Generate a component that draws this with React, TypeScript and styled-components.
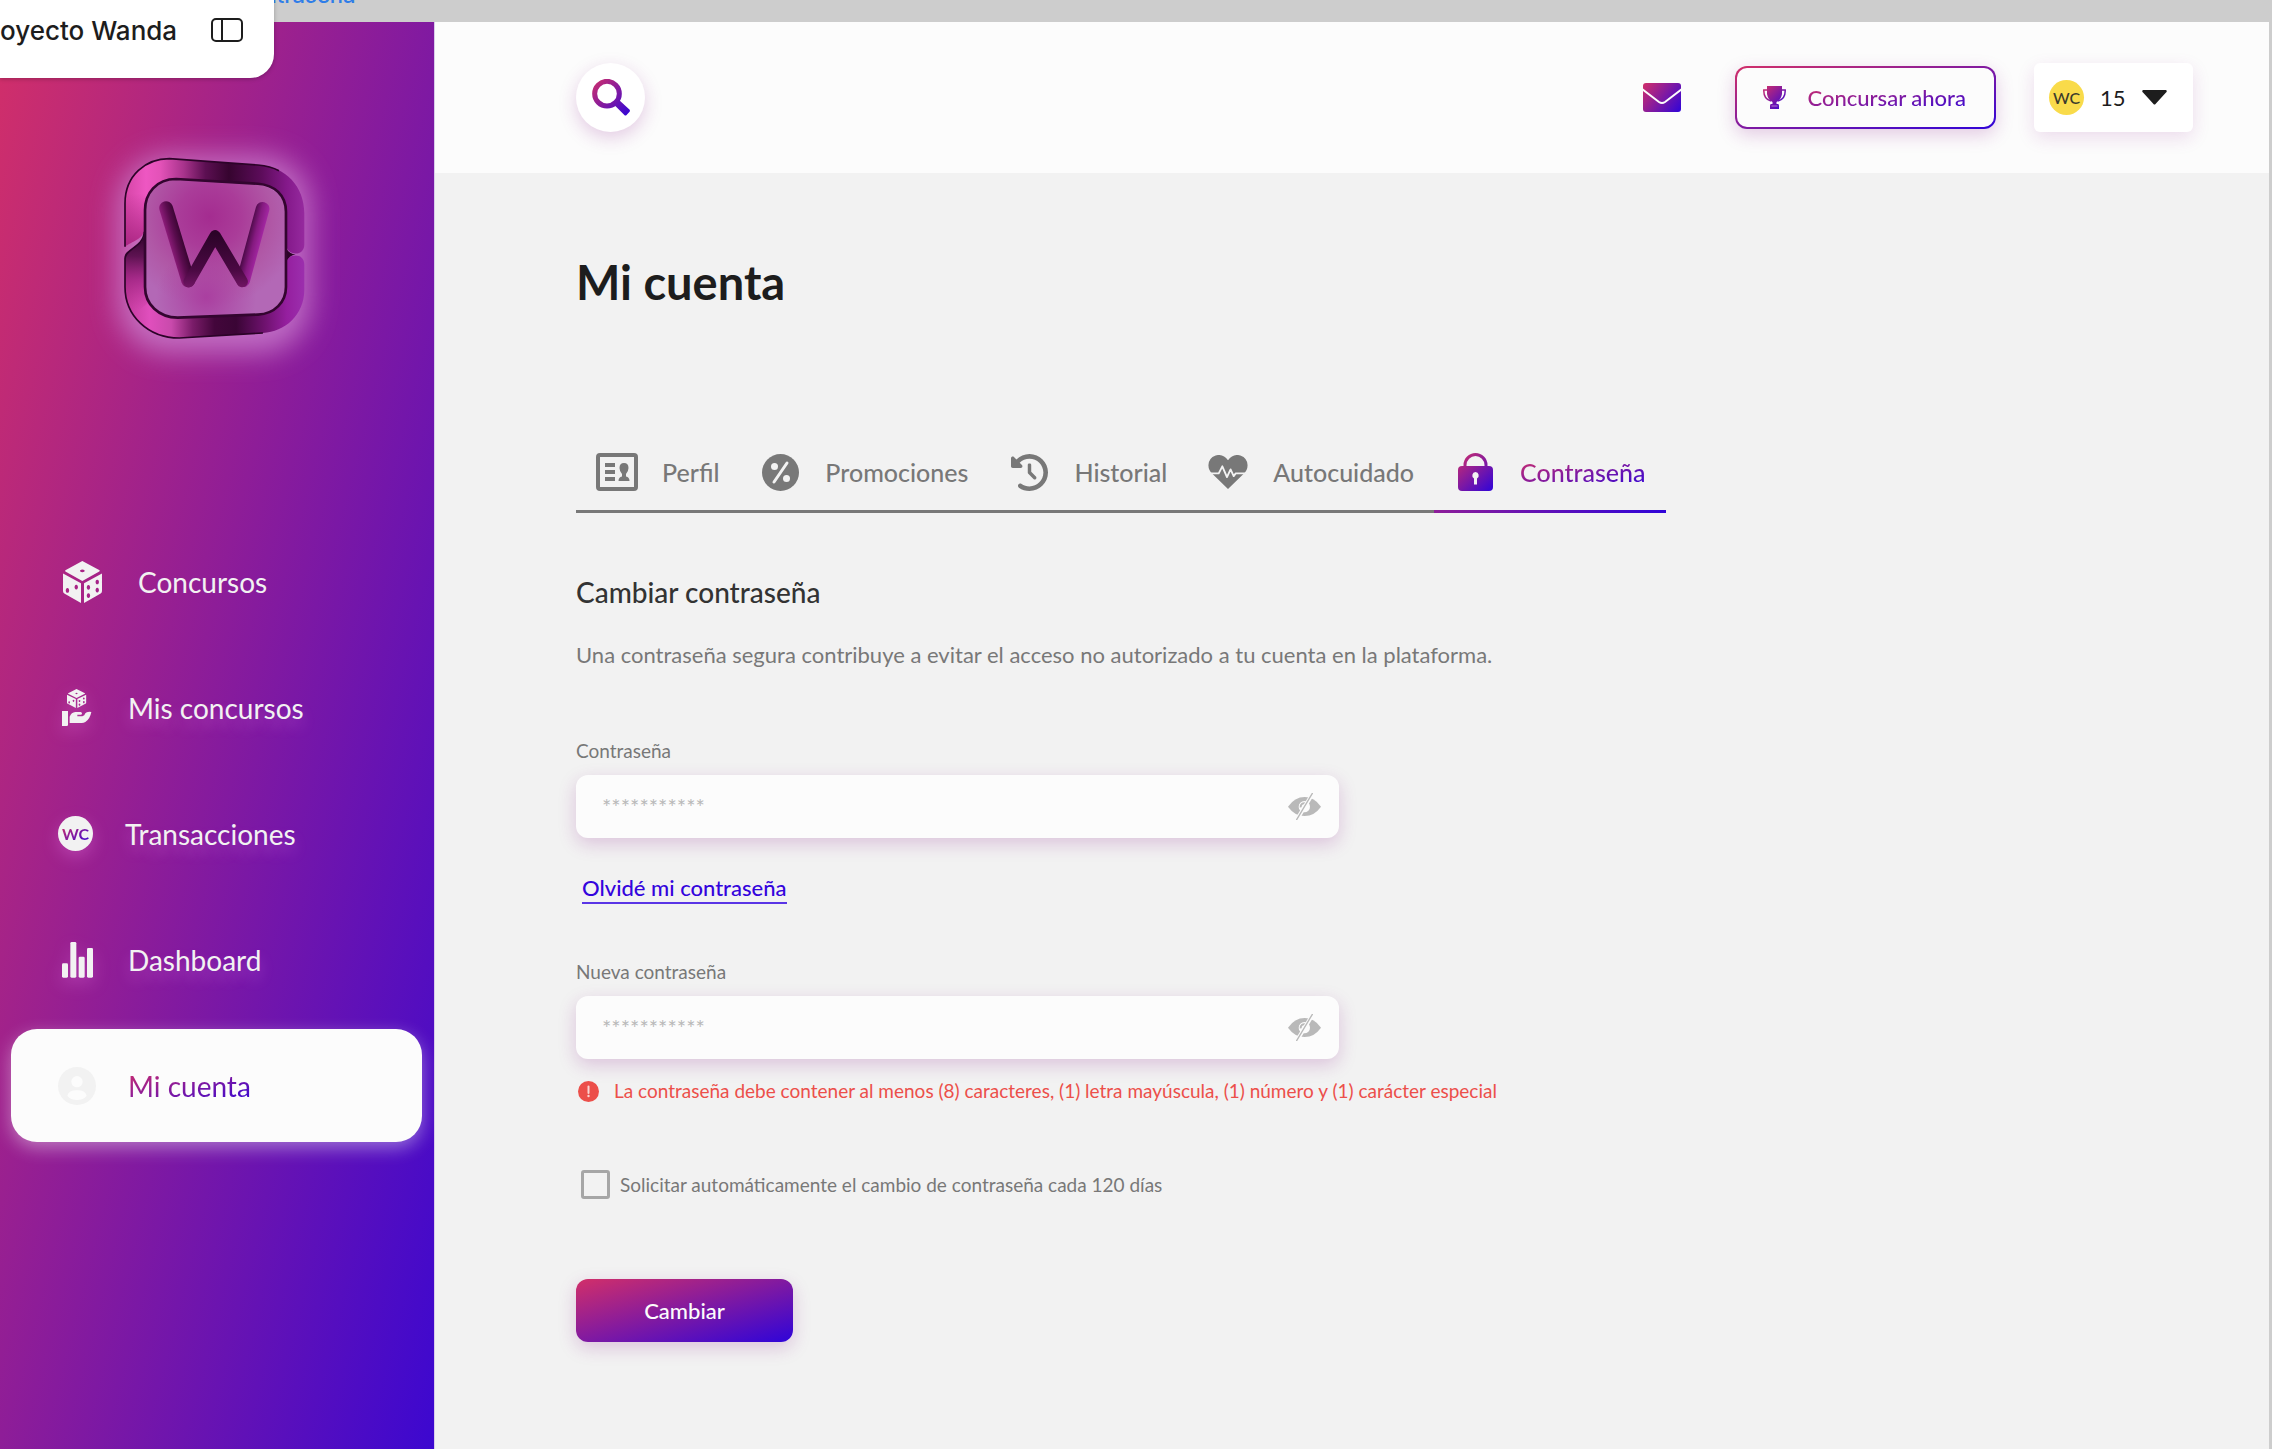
import React from "react";
import styled, { createGlobalStyle, css } from "styled-components";
import { FaClockRotateLeft } from "react-icons/fa6";

const pink = "#d22f69";
const blue = "#2f04d9";
const brandGradient = `linear-gradient(to bottom right, ${pink}, ${blue})`;
const softShadow = "0 6px 18px rgba(140, 30, 140, 0.22)";

const GlobalStyle = createGlobalStyle`
  *, *::before, *::after { box-sizing: border-box; }
  body {
    margin: 0;
    background: #f2f2f2;
    color: #1d1d1d;
    font-family: Lato, "Open Sans", sans-serif;
  }
  h1, h2, p { margin: 0; }
  button, input, select { font-family: inherit; }
  button { cursor: pointer; border: 0; background: none; padding: 0; }
  svg { display: block; flex: none; }
`;

const gradientText = css`
  background: ${brandGradient};
  background-clip: text;
  -webkit-background-clip: text;
  color: transparent;
`;

/* ---------- canvas chrome ---------- */

const CanvasStrip = styled.div`
  position: relative;
  height: 22px;
  background: #cdcdcd;
  overflow: hidden;
`;

const FrameName = styled.span`
  position: absolute;
  left: 234px;
  bottom: 13px;
  font: 500 22px/28px Inter, sans-serif;
  color: #2f7de8;
`;

const FileTab = styled.div`
  position: absolute;
  top: 0;
  left: 0;
  z-index: 2;
  display: flex;
  justify-content: space-between;
  width: 274px;
  height: 78px;
  padding: 15px 31px 0 0;
  background: #fff;
  border-radius: 0 0 24px 0;
  box-shadow: 0 1px 4px rgba(0, 0, 0, 0.25);
  font: 500 26px/32px Inter, sans-serif;
  white-space: nowrap;
`;

const PanelToggle = styled.button`
  height: 30px;
  display: flex;
  align-items: center;
  color: #1d1d1d;
`;

const Frame = styled.div`
  display: flex;
  min-height: calc(100vh - 22px);
  border-right: 3px solid #cdcdcd;
`;

/* ---------- sidebar ---------- */

const Sidebar = styled.aside`
  flex: none;
  width: 435px;
  border-right: 1px solid #d9cdea;
  padding: 136px 12px 0 11px;
  background: ${brandGradient} top left / 100% 1700px no-repeat ${blue};
`;

const Brand = styled.a`
  display: block;
  width: 181px;
  margin: 0 0 186px 113px;
`;

const Nav = styled.nav`
  display: flex;
  flex-direction: column;
  gap: 13px;
`;

const NavItem = styled.a<{ $active?: boolean; $glow?: boolean }>`
  display: flex;
  align-items: center;
  gap: 32px;
  height: 113px;
  padding: 0 47px;
  border-radius: 26px;
  font-size: 28px;
  line-height: 36px;
  color: #f2f2f2;
  text-decoration: none;
  ${(p) =>
    p.$glow &&
    css`
      text-shadow: 0 8px 14px rgba(255, 150, 255, 0.3);
      svg, i { filter: drop-shadow(0 6px 8px rgba(255, 150, 255, 0.25)); }
    `}
  ${(p) =>
    p.$active &&
    css`
      background: #fcfcfc;
      box-shadow: 0 6px 18px rgba(255, 255, 255, 0.4);
    `}
`;

const IconSlot = styled.span<{ $width?: number }>`
  display: flex;
  justify-content: center;
  width: ${(p) => p.$width ?? 38}px;
`;

const GradientLabel = styled.span`
  ${gradientText}
`;

const Coin = styled.i<{ $gold?: boolean }>`
  display: flex;
  align-items: center;
  justify-content: center;
  flex: none;
  width: 35px;
  height: 35px;
  border-radius: 50%;
  background: ${(p) => (p.$gold ? "#f9db4a" : "#f2f2f2")};
  color: #3a3a2c;
  font: ${(p) => (p.$gold ? 500 : 700)} 16px/20px Lato, sans-serif;
  text-shadow: none;
`;

/* ---------- header ---------- */

const Main = styled.main`
  flex: 1;
  min-width: 0;
`;

const Header = styled.header`
  display: flex;
  align-items: center;
  height: 151px;
  padding: 0 76px 0 141px;
  background: #fcfcfc;
`;

const SearchButton = styled.button`
  display: grid;
  place-items: center;
  width: 69px;
  height: 69px;
  margin-right: auto;
  border-radius: 50%;
  background: #fff;
  box-shadow: ${softShadow};
`;

const OutlineButton = styled.button`
  display: flex;
  align-items: center;
  gap: 22px;
  height: 63px;
  margin: 0 38px 0 54px;
  padding: 0 28px 0 26px;
  border: 2px solid transparent;
  border-radius: 12px;
  background: linear-gradient(#fcfcfc, #fcfcfc) padding-box, ${brandGradient} border-box;
  box-shadow: ${softShadow};
  font-size: 22px;
  font-weight: 500;
  line-height: 28px;
`;

const Wallet = styled.label`
  display: flex;
  align-items: center;
  height: 69px;
  width: 159px;
  padding: 0 26px 0 15px;
  border-radius: 6px;
  background: #fff;
  box-shadow: 0 6px 18px rgba(140, 30, 140, 0.14);
`;

const WalletSelect = styled.select`
  appearance: none;
  flex: 1;
  min-width: 0;
  margin-left: 16px;
  padding: 0;
  border: 0;
  background: none;
  color: #1d1d1d;
  font-size: 22px;
  line-height: 28px;
`;

/* ---------- content ---------- */

const Content = styled.div`
  padding: 81px 141px 107px;
`;

const Title = styled.h1`
  font-size: 47px;
  font-weight: 700;
  line-height: 56px;
`;

const Tabs = styled.div`
  display: flex;
  width: max-content;
  margin-top: 124px;
`;

const Tab = styled.button<{ $active?: boolean }>`
  display: flex;
  align-items: center;
  gap: 24px;
  height: 79px;
  padding: 0 20px;
  border-bottom: 3px solid #787878;
  color: #787878;
  font-size: 25px;
  font-weight: 500;
  line-height: 32px;
  ${(p) => p.$active && css`border-image: linear-gradient(90deg, #8e1e99, ${blue}) 1;`}
`;

const TabIcon = styled.span`
  display: flex;
  justify-content: center;
  width: 42px;
`;

const Form = styled.form`
  display: flex;
  flex-direction: column;
  align-items: flex-start;
  margin-top: 61px;
`;

const SectionTitle = styled.h2`
  color: #333;
  font-size: 28px;
  font-weight: 500;
  line-height: 36px;
`;

const Intro = styled.p`
  margin: 31px 0 70px;
  color: #787878;
  font-size: 22px;
  line-height: 28px;
`;

const FieldLabel = styled.label`
  color: #787878;
  font-size: 19px;
  line-height: 24px;
`;

const FieldBox = styled.div`
  display: flex;
  align-items: center;
  width: 763px;
  max-width: 100%;
  height: 63px;
  margin-top: 12px;
  padding: 0 18px 0 26px;
  border-radius: 12px;
  background: #fcfcfc;
  box-shadow: ${softShadow};
`;

const PasswordInput = styled.input`
  flex: 1;
  min-width: 0;
  padding: 0;
  border: 0;
  outline: 0;
  background: none;
  font-size: 22px;
  line-height: 28px;
  &::placeholder { color: #b9b9b9; opacity: 1; }
`;

const ForgotLink = styled.a`
  margin: 36px 0 56px 6px;
  border-bottom: 2px solid #5a35e6;
  color: #3404dd;
  font-size: 22px;
  font-weight: 500;
  line-height: 28px;
  text-decoration: none;
`;

const ErrorText = styled.p`
  display: flex;
  align-items: center;
  gap: 15px;
  margin: 20px 0 67px 2px;
  color: #ec4f4a;
  font-size: 19px;
  line-height: 24px;
`;

const CheckRow = styled.label`
  display: flex;
  align-items: center;
  gap: 10px;
  margin-left: 5px;
  color: #787878;
  font-size: 19px;
  line-height: 24px;
`;

const Checkbox = styled.input`
  appearance: none;
  width: 29px;
  height: 29px;
  margin: 0;
  border: 3px solid #a6a6a6;
  border-radius: 3px;
  &:checked { background: #a6a6a6; }
`;

const PrimaryButton = styled.button`
  width: 217px;
  height: 63px;
  margin-top: 80px;
  border-radius: 12px;
  background: ${brandGradient};
  box-shadow: ${softShadow};
  color: #fcfcfc;
  font-size: 22px;
  font-weight: 500;
  line-height: 28px;
`;

/* ---------- drawings ---------- */

const Paint = ({ id, w, h }: { id: string; w: number; h: number }) => (
  <defs>
    <linearGradient id={id} gradientUnits="userSpaceOnUse" x1="0" y1="0" x2={w} y2={h}>
      <stop stopColor={pink} />
      <stop offset="1" stopColor={blue} />
    </linearGradient>
  </defs>
);

const WandaMark = () => (
  <svg width="181" height="181" viewBox="374 474 542 542" overflow="visible" role="img" aria-label="Wanda">
    <defs>
      <linearGradient id="ringTop" gradientUnits="userSpaceOnUse" x1="375" y1="590" x2="915" y2="590">
        <stop stopColor="#d545a6" />
        <stop offset="0.12" stopColor="#ee57c2" />
        <stop offset="0.2" stopColor="#e352b8" />
        <stop offset="0.33" stopColor="#a8338c" />
        <stop offset="0.45" stopColor="#5c0f52" />
        <stop offset="0.58" stopColor="#36042f" />
        <stop offset="0.76" stopColor="#5c0c5a" />
        <stop offset="0.9" stopColor="#84198a" />
        <stop offset="1" stopColor="#962a9f" />
      </linearGradient>
      <linearGradient id="ringBottom" gradientUnits="userSpaceOnUse" x1="375" y1="900" x2="915" y2="900">
        <stop stopColor="#c23a9c" />
        <stop offset="0.14" stopColor="#e04fbd" />
        <stop offset="0.26" stopColor="#c94aac" />
        <stop offset="0.38" stopColor="#7a1c69" />
        <stop offset="0.5" stopColor="#43063b" />
        <stop offset="0.62" stopColor="#3a0535" />
        <stop offset="0.78" stopColor="#6f126f" />
        <stop offset="0.9" stopColor="#951f9f" />
        <stop offset="1" stopColor="#9c2fae" />
      </linearGradient>
      <linearGradient id="sideShade" gradientUnits="userSpaceOnUse" x1="400" y1="580" x2="400" y2="740">
        <stop stopColor="#a3207c" stopOpacity="0" />
        <stop offset="1" stopColor="#a3207c" stopOpacity="0.85" />
      </linearGradient>
      <linearGradient id="fold" gradientUnits="userSpaceOnUse" x1="420" y1="700" x2="400" y2="930">
        <stop stopColor="#2c0328" />
        <stop offset="0.3" stopColor="#4a0a42" stopOpacity="0.85" />
        <stop offset="0.6" stopColor="#8e1a75" stopOpacity="0.6" />
        <stop offset="1" stopColor="#a8247f" stopOpacity="0" />
      </linearGradient>
      <radialGradient id="panel" gradientUnits="userSpaceOnUse" cx="630" cy="650" r="270">
        <stop stopColor="#a42c90" />
        <stop offset="0.35" stopColor="#aa3c99" />
        <stop offset="0.7" stopColor="#b058a6" />
        <stop offset="1" stopColor="#b368b6" />
      </radialGradient>
      <radialGradient id="panelLow" gradientUnits="userSpaceOnUse" cx="620" cy="890" r="150">
        <stop stopColor="#aa3fa0" />
        <stop offset="1" stopColor="#aa3fa0" stopOpacity="0" />
      </radialGradient>
      <linearGradient id="armLeft" gradientUnits="userSpaceOnUse" x1="512" y1="735" x2="554" y2="723">
        <stop stopColor="#8a1b77" />
        <stop offset="0.5" stopColor="#5a0c4e" />
        <stop offset="1" stopColor="#36042f" />
      </linearGradient>
      <linearGradient id="armRight" gradientUnits="userSpaceOnUse" x1="740" y1="728" x2="780" y2="738">
        <stop stopColor="#4d0a49" />
        <stop offset="0.5" stopColor="#851a80" />
        <stop offset="1" stopColor="#a126a0" />
      </linearGradient>
      <linearGradient id="armMid" gradientUnits="userSpaceOnUse" x1="647" y1="700" x2="647" y2="860">
        <stop stopColor="#2b0328" />
        <stop offset="0.7" stopColor="#4c0944" />
        <stop offset="1" stopColor="#701563" />
      </linearGradient>
      <filter id="halo" x="-50%" y="-50%" width="200%" height="200%">
        <feGaussianBlur stdDeviation="42" />
      </filter>
    </defs>
    <rect x="356" y="466" width="576" height="592" rx="150" fill="#d08ad6" opacity="0.72" filter="url(#halo)" />
    <path d="M437 630Q441 540 530 540L775 553Q858 570 858 640V850Q855 930 770 942L540 950Q441 942 437 860Z" fill="url(#panel)" />
    <path d="M437 630Q441 540 530 540L775 553Q858 570 858 640V850Q855 930 770 942L540 950Q441 942 437 860Z" fill="url(#panelLow)" />
    <path
      d="M377 740V610C377 525 440 476 510 476L775 495C860 500 914 560 914 640V732C914 750 903 760 888 760C872 760 860 750 860 734V635C860 585 825 555 775 553L530 540C470 540 437 580 437 630V680C437 718 395 724 377 740Z"
      fill="url(#ringTop)"
    />
    <path d="M377 740V570H437V680C437 718 395 724 377 740Z" fill="url(#sideShade)" />
    <path d="M377 740V610C377 525 440 476 510 476L775 495C800 497 820 502 838 512" fill="none" stroke="#2c0328" strokeWidth="5" />
    <path
      d="M377 775C377 745 437 742 437 690V860C437 912 478 952 535 952L775 942C825 940 860 905 860 860V792C860 775 872 766 888 766C903 766 914 776 914 794V868C914 945 855 995 790 998L540 1013C445 1013 377 945 377 860Z"
      fill="url(#ringBottom)"
    />
    <path d="M377 775C377 745 437 742 437 690V860L450 905 400 945Q377 910 377 860Z" fill="url(#fold)" />
    <path d="M377 860V775C377 745 432 742 435 695M377 860C377 945 445 1013 540 1013L790 998" fill="none" stroke="#2c0328" strokeWidth="5" />
    <path d="M860 745Q870 762 888 763Q868 766 860 785Z" fill="#2c0328" />
    <path d="M437 630C437 580 470 537 530 537L775 551C825 555 859 585 859 635V860C859 905 825 941 775 943L535 952C478 952 437 912 437 860Z" fill="none" stroke="#33052f" strokeWidth="8" />
    <g fill="none" strokeLinecap="round" strokeLinejoin="round">
      <polyline points="789,626 731,840" stroke="url(#armRight)" strokeWidth="41" />
      <polyline points="500,624 566,841" stroke="url(#armLeft)" strokeWidth="41" />
      <polyline points="569,844 647,707 728,844" stroke="url(#armMid)" strokeWidth="34" />
    </g>
  </svg>
);

const DieShape = () => (
  <path
    fillRule="evenodd"
    d="M57 0L108 27Q109 29 107 31L57 59L7 31Q5 29 7 27ZM57 25a7 4 0 1 0 .1 0ZM0 37L53 66V124L5 97Q0 94 0 89ZM13 80a5 7 0 1 0 .1 0ZM39 70a5 7 0 1 0 .1 0ZM115 37L62 66V124L110 97Q115 94 115 89ZM101 55a5 7 0 1 0 .1 0ZM75 71a5 7 0 1 0 .1 0ZM101 79a5 7 0 1 0 .1 0ZM75 95a5 7 0 1 0 .1 0Z"
  />
);

const DieIcon = () => (
  <svg width="39" height="42" viewBox="0 0 115 124" fill="currentColor">
    <DieShape />
  </svg>
);

const HandDieIcon = () => (
  <svg width="30" height="37" viewBox="0 0 90 111" fill="currentColor">
    <g transform="translate(15 0) scale(0.5 0.46)">
      <DieShape />
    </g>
    <path d="M0 66H18V108Q18 111 14 111H0ZM23 102V83Q28 70 40 69H56Q63 72 58 77H46V82H61Q68 80 70 73Q74 67 88 69Q84 90 70 99Q64 103 56 102Z" />
  </svg>
);

const BarsIcon = () => (
  <svg width="31" height="36" viewBox="0 0 93 108" fill="currentColor">
    <rect x="0" y="64" width="18" height="43" rx="4" />
    <rect x="25" y="0" width="18" height="107" rx="4" />
    <rect x="50" y="44" width="18" height="63" rx="4" />
    <rect x="75" y="18" width="18" height="89" rx="4" />
  </svg>
);

const AccountIcon = () => (
  <svg width="38" height="38" viewBox="0 0 114 114" fill="#f2f2f2">
    <circle cx="57" cy="57" r="57" />
    <circle cx="57" cy="44" r="17" fill="#fcfcfc" />
    <path d="M28 86Q32 70 57 70Q82 70 86 86Q76 99 57 99Q38 99 28 86Z" fill="#fcfcfc" />
  </svg>
);

const SearchIcon = () => (
  <svg width="38" height="37" viewBox="0 0 114 111">
    <Paint id="searchPaint" w={114} h={111} />
    <circle cx="45" cy="44" r="37" fill="none" stroke="url(#searchPaint)" strokeWidth="15" />
    <path d="M67 78L82 64L113 92Q115 96 112 99L103 109Q100 111 97 108Z" fill="url(#searchPaint)" />
  </svg>
);

const MailIcon = () => (
  <svg width="38" height="29" viewBox="0 0 38 29">
    <Paint id="mailPaint" w={38} h={29} />
    <rect width="38" height="29" rx="3" fill="url(#mailPaint)" />
    <path d="M-1 6L16 19Q19 21 22 19L39 6" fill="none" stroke="#fcfcfc" strokeWidth="2" />
  </svg>
);

const TrophyIcon = () => (
  <svg width="23" height="23" viewBox="0 0 23 23">
    <Paint id="trophyPaint" w={23} h={23} />
    <path
      d="M4 0H19V8Q18 14 13.500 16V18H15Q16 18 16 20V23H7V20Q7 18 8 18H9.500V16Q5 14 4 8Z"
      fill="url(#trophyPaint)"
    />
    <path d="M4.500 4H.8Q.5 13 8 15M18.500 4H22.200Q22.500 13 15 15" fill="none" stroke="url(#trophyPaint)" strokeWidth="1.500" />
    <path d="M8.500 20H14.500" stroke="#d9a8dd" strokeWidth="0.700" />
  </svg>
);

const CaretIcon = () => (
  <svg width="25" height="15" viewBox="0 0 25 15">
    <path d="M1 0H24Q25.500 1 24 2.500L13.500 14Q12.500 15 11.500 14L1 2.500Q-.5 1 1 0Z" fill="#1d1d1d" />
  </svg>
);

const ProfileIcon = () => (
  <svg width="42" height="38" viewBox="0 0 42 38" fill="currentColor">
    <rect x="2" y="2" width="38" height="34" rx="2" fill="none" stroke="currentColor" strokeWidth="4" />
    <path d="M9 10H19V14H9ZM9 17H19V21H9ZM9 24H19V28H9ZM28 10Q32.500 10 32.500 15Q32.500 18 30 21V23.500Q33.500 24 33.500 28H22.500Q22.500 24 26 23.500V21Q23.500 18 23.500 15Q23.500 10 28 10Z" />
  </svg>
);

const PercentIcon = () => (
  <svg width="37" height="37" viewBox="0 0 37 37">
    <circle cx="18.500" cy="18.500" r="18.500" fill="currentColor" />
    <path d="M25 9L12 28" stroke="#f2f2f2" strokeWidth="3" strokeLinecap="round" />
    <circle cx="12.500" cy="12.500" r="3.500" fill="#f2f2f2" />
    <circle cx="24.500" cy="24.500" r="3.500" fill="#f2f2f2" />
  </svg>
);

const HeartIcon = () => (
  <svg width="40" height="34" viewBox="0 0 38 33">
    <path d="M19 5Q24 -1.500 31 .4Q38 3 38 10Q38 15 34 18.500L19 33L4 18.500Q0 15 0 10Q0 3 7 .4Q14 -1.500 19 5Z" fill="currentColor" />
    <path d="M0 17.800H10L13.500 11L18 21.500L21.500 14L24.500 20.500L26.500 17.800H38" fill="none" stroke="#f2f2f2" strokeWidth="1.800" strokeLinejoin="round" />
  </svg>
);

const LockIcon = () => (
  <svg width="35" height="38" viewBox="0 0 35 38">
    <Paint id="lockPaint" w={35} h={38} />
    <path d="M7 15V12A10.500 10.500 0 0 1 28 12V15" fill="none" stroke="url(#lockPaint)" strokeWidth="3" />
    <rect y="13" width="35" height="25" rx="4" fill="url(#lockPaint)" />
    <path d="M17.500 19A3.500 3.500 0 0 1 19 25.500V31.500H16V25.500A3.500 3.500 0 0 1 17.500 19Z" fill="#f2f2f2" />
  </svg>
);

const HiddenEyeIcon = () => (
  <svg width="33" height="27" viewBox="0 0 99 81">
    <path d="M0 41Q20 12 50 12Q79 12 99 41Q79 69 50 69Q20 69 0 41Z" fill="#b9b9b9" />
    <circle cx="49" cy="41" r="17" fill="#fcfcfc" />
    <path d="M38 43A11 11 0 0 1 52 31" fill="none" stroke="#b9b9b9" strokeWidth="6" />
    <path d="M75 0L26 81" stroke="#fcfcfc" strokeWidth="12" />
    <path d="M73 1L26 80" stroke="#b9b9b9" strokeWidth="4" strokeLinecap="round" />
  </svg>
);

const AlertIcon = () => (
  <svg width="21" height="21" viewBox="0 0 21 21">
    <circle cx="10.500" cy="10.500" r="10.500" fill="#ec4f4a" />
    <path d="M10.500 5.500V12" stroke="#f9d4d2" strokeWidth="2" strokeLinecap="round" />
    <circle cx="10.500" cy="15" r="1.200" fill="#f9d4d2" />
  </svg>
);

const SidebarToggleIcon = () => (
  <svg width="32" height="24" viewBox="0 0 32 24" fill="none" stroke="currentColor" strokeWidth="2">
    <rect x="1" y="1" width="30" height="22" rx="4" />
    <path d="M11 1V23" />
  </svg>
);

/* ---------- page ---------- */

const tabs = [
  { label: "Perfil", icon: <ProfileIcon /> },
  { label: "Promociones", icon: <PercentIcon /> },
  { label: "Historial", icon: <FaClockRotateLeft size={37} /> },
  { label: "Autocuidado", icon: <HeartIcon /> },
  { label: "Contraseña", icon: <LockIcon />, active: true },
];

function PasswordField({ id, label }: { id: string; label: string }) {
  return (
    <>
      <FieldLabel htmlFor={id}>{label}</FieldLabel>
      <FieldBox>
        <PasswordInput id={id} type="password" placeholder="***********" />
        <button type="button" aria-label="Mostrar contraseña">
          <HiddenEyeIcon />
        </button>
      </FieldBox>
    </>
  );
}

export default function App() {
  return (
    <>
      <GlobalStyle />
      <CanvasStrip>
        <FrameName>Contraseña</FrameName>
      </CanvasStrip>
      <FileTab>
        oyecto Wanda
        <PanelToggle type="button" aria-label="Panel">
          <SidebarToggleIcon />
        </PanelToggle>
      </FileTab>
      <Frame>
        <Sidebar>
          <Brand href="#">
            <WandaMark />
          </Brand>
          <Nav>
            <NavItem href="#">
              <IconSlot $width={48}><DieIcon /></IconSlot>
              Concursos
            </NavItem>
            <NavItem href="#" $glow>
              <IconSlot><HandDieIcon /></IconSlot>
              Mis concursos
            </NavItem>
            <NavItem href="#" $glow>
              <IconSlot $width={35}>
                <Coin><GradientLabel>WC</GradientLabel></Coin>
              </IconSlot>
              Transacciones
            </NavItem>
            <NavItem href="#" $glow>
              <IconSlot><BarsIcon /></IconSlot>
              Dashboard
            </NavItem>
            <NavItem href="#" $active aria-current="page">
              <IconSlot><AccountIcon /></IconSlot>
              <GradientLabel>Mi cuenta</GradientLabel>
            </NavItem>
          </Nav>
        </Sidebar>
        <Main>
          <Header>
            <SearchButton type="button" aria-label="Buscar">
              <SearchIcon />
            </SearchButton>
            <button type="button" aria-label="Mensajes">
              <MailIcon />
            </button>
            <OutlineButton type="button">
              <TrophyIcon />
              <GradientLabel>Concursar ahora</GradientLabel>
            </OutlineButton>
            <Wallet>
              <Coin $gold>WC</Coin>
              <WalletSelect aria-label="Saldo" defaultValue="15">
                <option>15</option>
              </WalletSelect>
              <CaretIcon />
            </Wallet>
          </Header>
          <Content>
            <Title>Mi cuenta</Title>
            <Tabs role="tablist">
              {tabs.map((t) => (
                <Tab key={t.label} type="button" role="tab" aria-selected={!!t.active} $active={t.active}>
                  <TabIcon>{t.icon}</TabIcon>
                  {t.active ? <GradientLabel>{t.label}</GradientLabel> : t.label}
                </Tab>
              ))}
            </Tabs>
            <Form onSubmit={(e) => e.preventDefault()}>
              <SectionTitle>Cambiar contraseña</SectionTitle>
              <Intro>Una contraseña segura contribuye a evitar el acceso no autorizado a tu cuenta en la plataforma.</Intro>
              <PasswordField id="current" label="Contraseña" />
              <ForgotLink href="#">Olvidé mi contraseña</ForgotLink>
              <PasswordField id="next" label="Nueva contraseña" />
              <ErrorText>
                <AlertIcon />
                La contraseña debe contener al menos (8) caracteres, (1) letra mayúscula, (1) número y (1) carácter especial
              </ErrorText>
              <CheckRow>
                <Checkbox type="checkbox" />
                Solicitar automáticamente el cambio de contraseña cada 120 días
              </CheckRow>
              <PrimaryButton type="submit">Cambiar</PrimaryButton>
            </Form>
          </Content>
        </Main>
      </Frame>
    </>
  );
}
